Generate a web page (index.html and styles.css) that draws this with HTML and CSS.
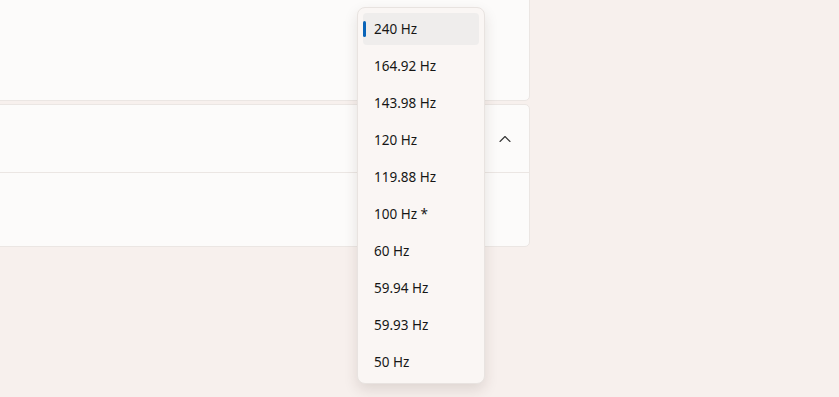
FILE: index.html
```html
<!DOCTYPE html>
<html>
<head>
<meta charset="utf-8">
<link rel="stylesheet" href="styles.css">
</head>
<body>
<div class="page">
  <div class="stack">
    <div class="card card-top"></div>
    <div class="card card-expander">
      <div class="exp-header">
        <svg class="chev" width="12" height="8" viewBox="0 0 12 8"><path d="M1 6.5 L6 1.5 L11 6.5" fill="none" stroke="#333" stroke-width="1.1" stroke-linecap="round" stroke-linejoin="round"/></svg>
      </div>
      <div class="exp-body"></div>
    </div>
  </div>
  <div class="menu">
    <div class="item selected"><span class="bar"></span>240 Hz</div>
    <div class="item">164.92 Hz</div>
    <div class="item">143.98 Hz</div>
    <div class="item">120 Hz</div>
    <div class="item">119.88 Hz</div>
    <div class="item">100 Hz *</div>
    <div class="item">60 Hz</div>
    <div class="item">59.94 Hz</div>
    <div class="item">59.93 Hz</div>
    <div class="item">50 Hz</div>
  </div>
</div>
</body>
</html>
```
FILE: styles.css
```css
html, body {
  margin: 0;
  padding: 0;
}
body {
  background: #f7f0ed;
  width: 839px;
  height: 397px;
  overflow: hidden;
  font-family: "Noto Sans", "Liberation Sans", sans-serif;
}
.page {
  position: relative;
  display: flow-root;
  width: 839px;
  height: 397px;
  overflow: hidden;
}
.stack {
  display: flex;
  flex-direction: column;
  gap: 3px;
  width: 540px;
  margin-left: -10px;
  margin-top: -30px;
}
.card {
  background: #fcfbfa;
  border: 1px solid #ebe6e3;
  border-radius: 5px;
  box-sizing: border-box;
}
.card-top {
  height: 131px;
}
.card-expander {
  height: 143px;
  display: flex;
  flex-direction: column;
}
.exp-header {
  height: 67px;
  border-bottom: 1px solid #ebe6e3;
  display: flex;
  align-items: center;
  justify-content: flex-end;
  padding-right: 18px;
}
.chev {
  display: block;
}
.exp-body {
  flex: 1;
}
.menu {
  position: absolute;
  left: 357px;
  top: 7px;
  width: 128px;
  box-sizing: border-box;
  padding: 5px;
  background: #faf6f4;
  border: 1px solid #e8e3e0;
  border-radius: 8px;
  box-shadow: 0 6px 14px rgba(60, 40, 30, 0.13);
  display: flex;
  flex-direction: column;
  gap: 5px;
}
.item {
  position: relative;
  height: 32px;
  display: flex;
  align-items: center;
  padding-left: 11px;
  border-radius: 4px;
  font-size: 13.5px;
  color: #161616;
}
.item.selected {
  background: #efedec;
}
.bar {
  position: absolute;
  left: 0;
  top: 8px;
  width: 3px;
  height: 16px;
  border-radius: 2px;
  background: #0a64b8;
}
```
